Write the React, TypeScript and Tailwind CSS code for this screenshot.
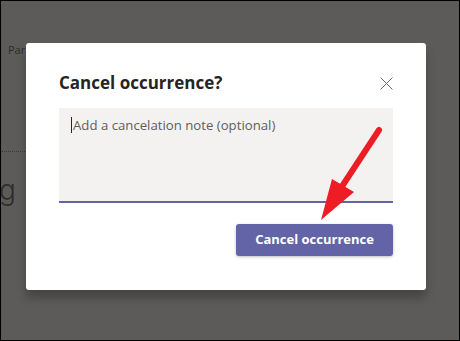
import React from "react";

const font = { fontFamily: '"Open Sans", "Noto Sans", sans-serif' };

function CancelArrow() {
	return (
		<svg
			className="absolute left-0 top-0 pointer-events-none"
			width="460"
			height="341"
			viewBox="0 0 460 341">
			<line
				x1="378"
				y1="129"
				x2="336"
				y2="193"
				stroke="#ee1c25"
				strokeWidth="6"
				strokeLinecap="round"
			/>
			<polygon points="320,219 331,178 353,191" fill="#ee1c25" />
		</svg>
	);
}

export default function App() {
	return (
		<div
			className="relative w-[460px] h-[341px] overflow-hidden border border-black bg-[#5c5b59]"
			style={font}>
			{/* page behind the dim */}
			<div className="pt-[41px] pl-[7px] text-[11px] text-[#2e2d2c]">Para</div>
			<div className="mt-[92px] w-[26px] border-t border-dotted border-[#3b3a39]"></div>
			<div className="mt-[24px] -ml-[2px] font-['Inter',sans-serif] font-light text-[28px] leading-none text-[#2e2d2c]">
				g
			</div>

			{/* dialog */}
			<div className="absolute left-[25px] top-[42px] w-[400px] h-[247px] rounded-[3px] bg-white px-[33px] pt-[27px] shadow-[0_8px_10px_rgba(0,0,0,0.25)]">
				<div className="flex items-center justify-between h-[26px]">
					<h2 className="text-[17px] font-bold text-[#252423]">
						Cancel occurrence?
					</h2>
					<svg width="13" height="13" viewBox="0 0 13 13">
						<path d="M0.5 0.5 L12.5 12.5 M12.5 0.5 L0.5 12.5" stroke="#6b6a69" strokeWidth="1" />
					</svg>
				</div>
				<div className="mt-[12px] h-[95px] bg-[#f3f2f1] border-b-2 border-[#6264a7] px-[12px] pt-[7px] flex">
					<span className="w-px h-[16px] bg-[#252423] mt-[2px] mr-px"></span>
					<span className="text-[13.2px] text-[#605e5c] leading-[20px]">
						Add a cancelation note (optional)
					</span>
				</div>
				<div className="flex justify-end mt-[21px]">
					<button className="w-[157px] h-[32px] rounded-[3px] bg-[#6264a7] text-white text-[13px] font-bold shadow-[0_1px_3px_rgba(0,0,0,0.25)]">
						Cancel occurrence
					</button>
				</div>
			</div>

			<CancelArrow />
		</div>
	);
}
